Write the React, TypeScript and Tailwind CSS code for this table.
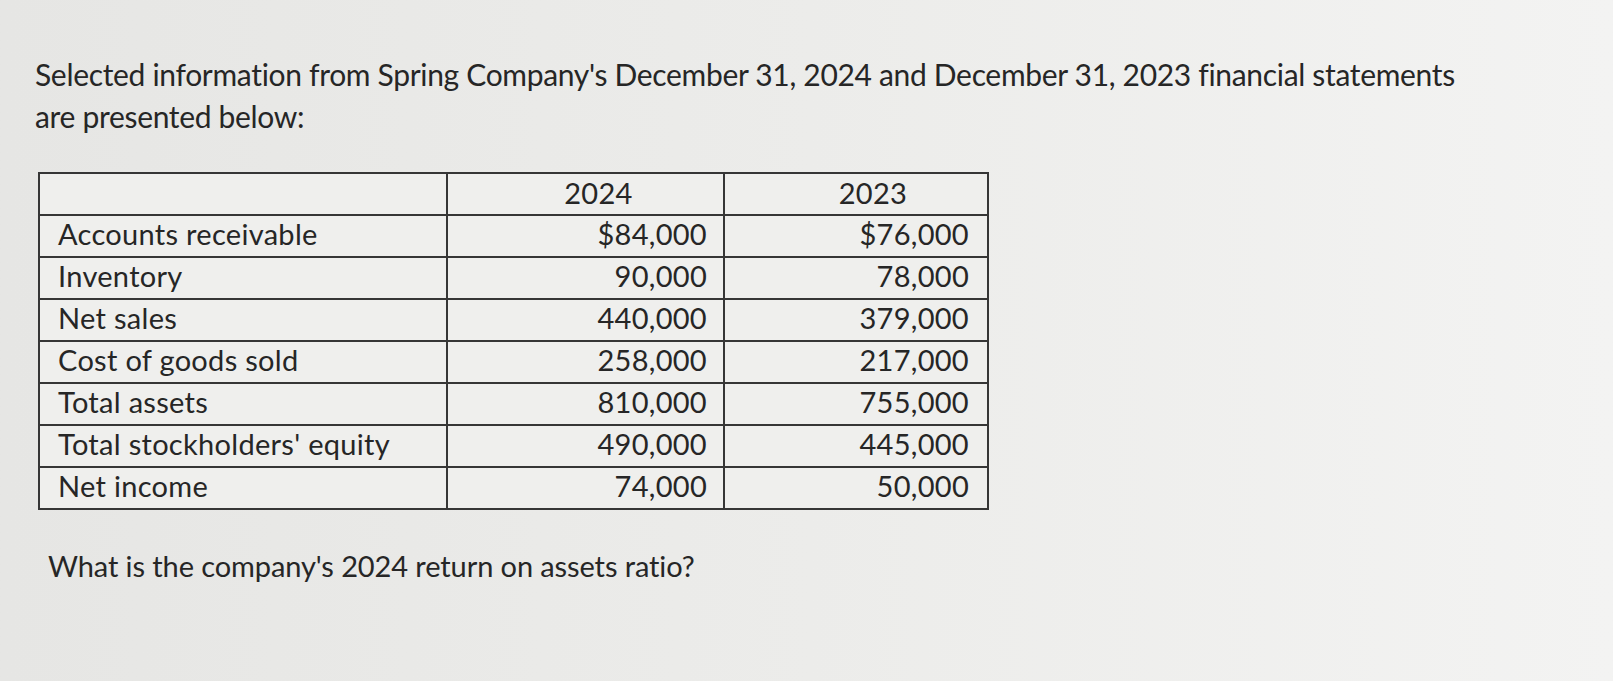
const rows: [string, string, string][] = [
  ["Accounts receivable", "$84,000", "$76,000"],
  ["Inventory", "90,000", "78,000"],
  ["Net sales", "440,000", "379,000"],
  ["Cost of goods sold", "258,000", "217,000"],
  ["Total assets", "810,000", "755,000"],
  ["Total stockholders' equity", "490,000", "445,000"],
  ["Net income", "74,000", "50,000"],
];

export default function App() {
  return (
    <div className="h-[681px] w-[1613px] overflow-hidden bg-gradient-to-r from-[#e6e6e4] via-[#ececea] to-[#f3f3f2] font-['Lato',sans-serif] text-[#262626]">
      <div className="pl-[35px] pt-[53px]">
        <p className="text-[30px] leading-[42px] tracking-[-0.32px]">
          Selected information from Spring Company's December 31, 2024 and December 31, 2023 financial statements
          <br />
          are presented below:
        </p>

        <table className="ml-[3px] mt-[35px] border-collapse border-2 border-[#363636] bg-[#efefed] text-[29px] tracking-[0.3px]">
          <thead>
            <tr className="h-[42px]">
              <th className="w-[408px] border-2 border-[#363636]" />
              <th className="w-[277px] border-2 border-[#363636] pb-[4px] pl-[26px] font-normal leading-none">2024</th>
              <th className="w-[264px] border-2 border-[#363636] pb-[4px] pl-[34px] font-normal leading-none">2023</th>
            </tr>
          </thead>
          <tbody>
            {rows.map(([label, a, b]) => (
              <tr key={label} className="h-[42px]">
                <td className="border-2 border-[#363636] px-[18px] pb-[6px] leading-none">{label}</td>
                <td className="border-2 border-[#363636] px-[16px] pb-[6px] text-right leading-none">{a}</td>
                <td className="border-2 border-[#363636] px-[18px] pb-[6px] text-right leading-none">{b}</td>
              </tr>
            ))}
          </tbody>
        </table>

        <p className="ml-[13px] mt-[39px] text-[29px] leading-[34px] tracking-[-0.1px]">What is the company's 2024 return on assets ratio?</p>
      </div>
    </div>
  );
}
